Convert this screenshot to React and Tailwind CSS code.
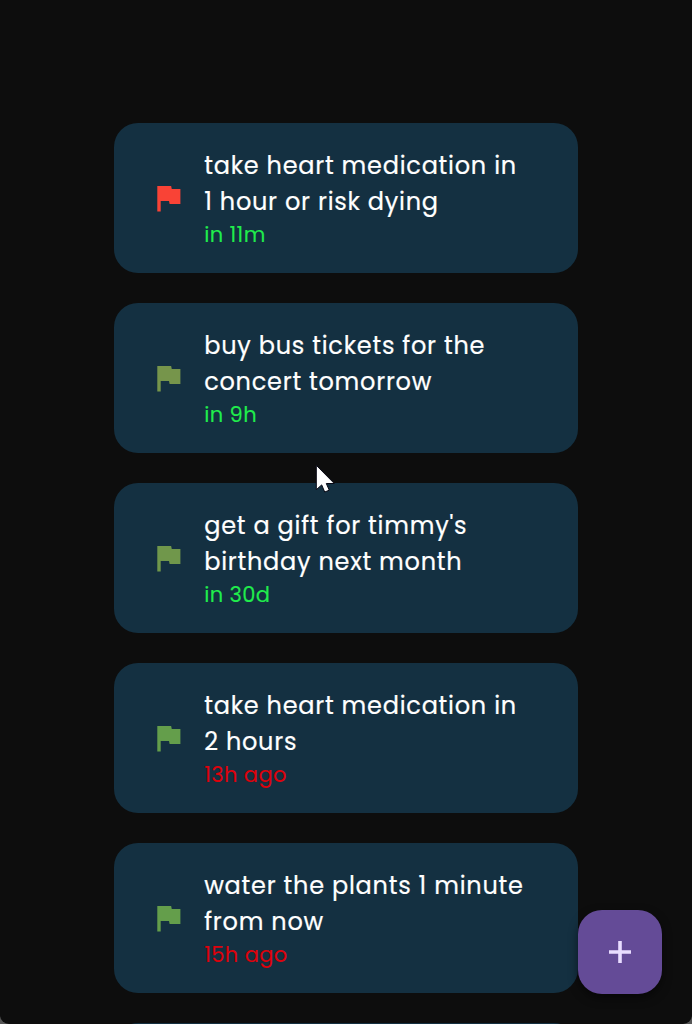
const reminders = [
  {
    lines: ['take heart medication in', '1 hour or risk dying'],
    time: 'in 11m',
    color: 'text-[#20ec4c]',
    flag: 'text-[#f94336]',
  },
  {
    lines: ['buy bus tickets for the', 'concert tomorrow'],
    time: 'in 9h',
    color: 'text-[#20ec4c]',
    flag: 'text-[#76954b]',
  },
  {
    lines: ["get a gift for timmy's", 'birthday next month'],
    time: 'in 30d',
    color: 'text-[#20ec4c]',
    flag: 'text-[#70974b]',
  },
  {
    lines: ['take heart medication in', '2 hours'],
    time: '13h ago',
    color: 'text-[#de020c]',
    flag: 'text-[#649e4b]',
  },
  {
    lines: ['water the plants 1 minute', 'from now'],
    time: '15h ago',
    color: 'text-[#de020c]',
    flag: 'text-[#649e4b]',
  },
];

function Flag({ className }) {
  return (
    <svg viewBox="0 0 36 36" fill="currentColor" className={`size-9 shrink-0 ${className}`}>
      <path
        transform="translate(-0.4 0) scale(1.54 1.5)"
        d="M14.4 6L14 4H5v17h2.2v-7h5.4l.4 2h7V6z"
      />
    </svg>
  );
}

function Card({ item }) {
  return (
    <li className="flex h-[150px] w-[464px] shrink-0 items-center rounded-[24px] bg-[#143041] pl-9">
      <Flag className={item.flag} />
      <div className="pt-0.5 pl-[18.2px]">
        {item.lines.map((line) => (
          <p
            key={line}
            className="h-9 text-[24px] leading-9 tracking-[0.75px] whitespace-nowrap text-white [-webkit-text-stroke:0.2px_currentColor]"
          >
            {line}
          </p>
        ))}
        <p
          className={`h-[30px] text-[21px] leading-[30px] tracking-[0.375px] whitespace-nowrap [-webkit-text-stroke:0.1px_currentColor] ${item.color}`}
        >
          {item.time}
        </p>
      </div>
    </li>
  );
}

export default function App() {
  return (
    <div className="h-[1024px] w-[692px] bg-[#555555] font-['Poppins','Inter',sans-serif]">
      <main className="relative h-full overflow-hidden rounded-b-[9px] bg-[#0d0d0d]">
        <ul className="flex flex-col items-center gap-[30px] pt-[123px]">
          {reminders.map((r, i) => (
            <Card key={i} item={r} />
          ))}
          <li className="h-[150px] w-[464px] shrink-0 rounded-[24px] bg-[#143041]" />
        </ul>
        <button
          aria-label="Add reminder"
          className="absolute right-[30px] bottom-[30px] flex size-[84px] items-center justify-center rounded-[24px] bg-[#644b97] text-[#e9ddff] shadow-[0_4px_10px_rgba(0,0,0,0.5)]"
        >
          <svg viewBox="0 0 22 22" className="size-[22px]" fill="currentColor">
            <path d="M9.2 0h3.6v9.2H22v3.6h-9.2V22H9.2v-9.2H0V9.2h9.2z" />
          </svg>
        </button>
        <svg viewBox="0 0 20 30" className="absolute top-[464px] left-[315px] h-[30px] w-5">
          <path d="M1.3 1.3V25.7l5.4-4.8 3 7.1 4.6-1.8-3-6.7h8z" fill="#fff" stroke="#080814" strokeWidth="1" />
        </svg>
      </main>
    </div>
  );
}
